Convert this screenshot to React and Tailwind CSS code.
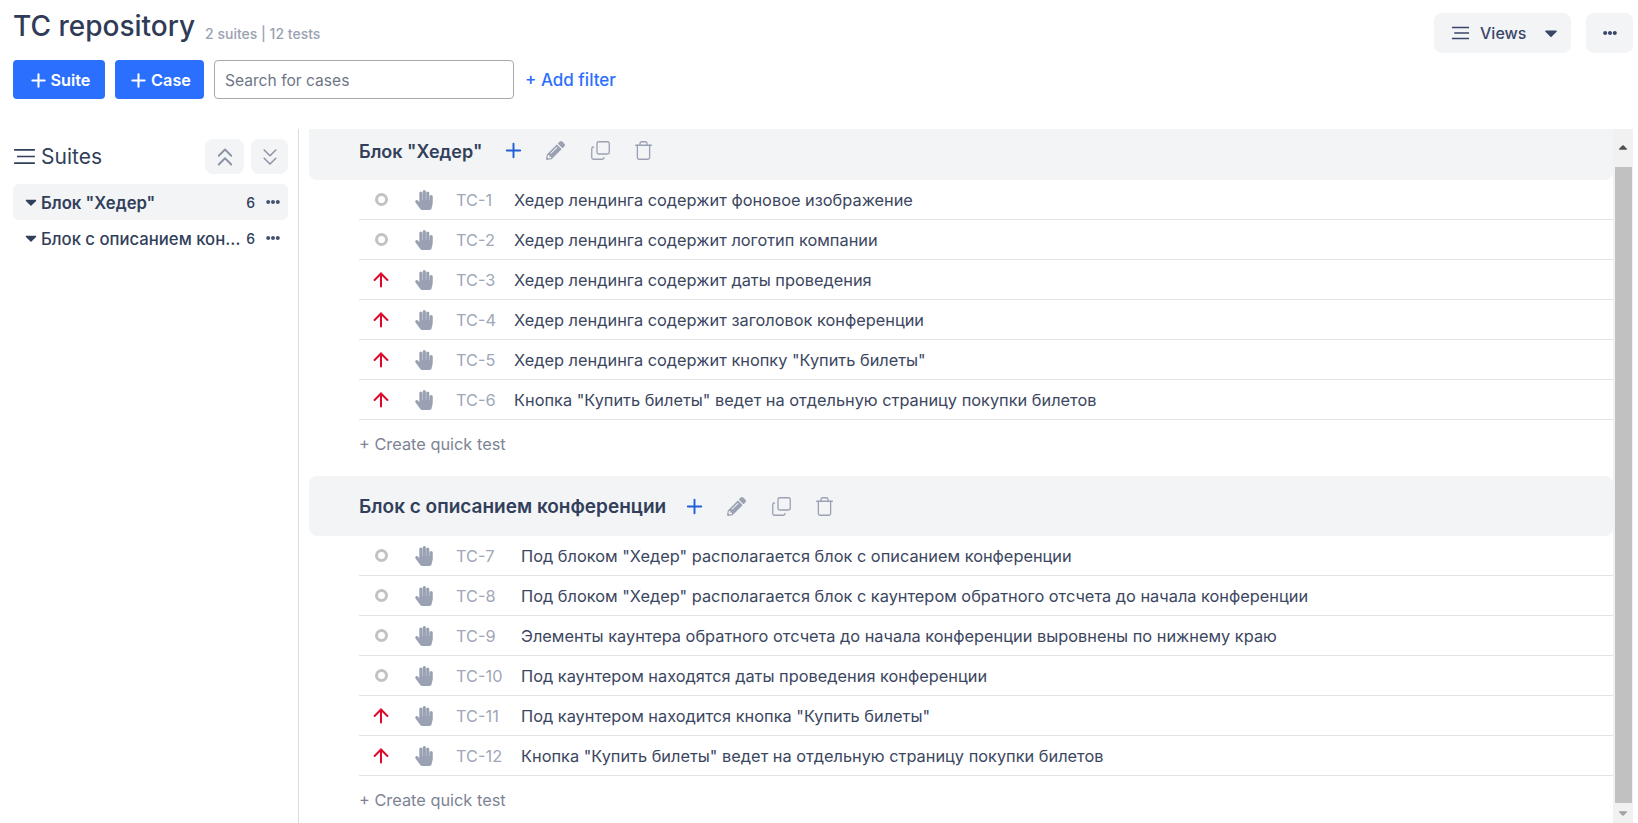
import { ArrowUp, ChevronsDown, ChevronsUp, Copy, Plus, Trash } from "lucide-react";
import { FaCaretDown, FaEllipsisH, FaHandPaper, FaPencilAlt } from "react-icons/fa";

const suites = [
  {
    name: 'Блок "Хедер"',
    head: "h-[51px] pb-[9px] rounded-b-lg",
    titleSize: "text-[18px]",
    plusGap: "ml-[20px]",
    cases: [
      ["TC-1", "Хедер лендинга содержит фоновое изображение", "none"],
      ["TC-2", "Хедер лендинга содержит логотип компании", "none"],
      ["TC-3", "Хедер лендинга содержит даты проведения", "high"],
      ["TC-4", "Хедер лендинга содержит заголовок конференции", "high"],
      ["TC-5", 'Хедер лендинга содержит кнопку "Купить билеты"', "high"],
      ["TC-6", 'Кнопка "Купить билеты" ведет на отдельную страницу покупки билетов', "high"],
    ],
    idWidth: "w-[58px]",
  },
  {
    name: "Блок с описанием конференции",
    head: "h-[60px] rounded-lg",
    titleSize: "text-[19px]",
    plusGap: "ml-[17px]",
    cases: [
      ["TC-7", 'Под блоком "Хедер" располагается блок с описанием конференции', "none"],
      ["TC-8", 'Под блоком "Хедер" располагается блок с каунтером обратного отсчета до начала конференции', "none"],
      ["TC-9", "Элементы каунтера обратного отсчета до начала конференции выровнены по нижнему краю", "none"],
      ["TC-10", "Под каунтером находятся даты проведения конференции", "none"],
      ["TC-11", 'Под каунтером находится кнопка "Купить билеты"', "high"],
      ["TC-12", 'Кнопка "Купить билеты" ведет на отдельную страницу покупки билетов', "high"],
    ],
    idWidth: "w-[65px]",
  },
];

function Lines({ className }) {
  return (
    <svg className={className} viewBox="0 0 24 18" fill="none" stroke="currentColor" strokeWidth="1.8">
      <path d="M1 2h22M4 9h19M1 16h22" />
    </svg>
  );
}

function CaseRow({ id, title, priority, idWidth }) {
  return (
    <div className="flex h-10 items-center border-b border-[#e1e3e6] text-[16.35px]">
      <div className="flex w-[44px] justify-center">
        {priority === "high" ? (
          <ArrowUp className="h-[22px] w-[22px] text-[#dc0b2c]" strokeWidth={2.2} />
        ) : (
          <span className="h-[13px] w-[13px] rounded-full border-[3px] border-[#c2c2c2]" />
        )}
      </div>
      <div className="flex w-[53px] justify-center pr-[11px]">
        <FaHandPaper className="h-[20px] w-[20px] text-[#99a1b3]" />
      </div>
      <div className={`${idWidth} pt-[2px] text-[#a0a7b7]`}>{id}</div>
      <div className="pt-[2px] text-[#3b4660]">{title}</div>
    </div>
  );
}

function Suite({ suite }) {
  return (
    <section className="mb-[8px]">
      <div className={`${suite.head} flex items-center bg-[#f3f4f6] pl-[50px]`}>
        <h2 className={`${suite.titleSize} pt-[3px] font-semibold text-[#323f5a]`}>{suite.name}</h2>
        <Plus className={`${suite.plusGap} h-[23px] w-[23px] text-[#1f5fd6]`} strokeWidth={2} />
        <FaPencilAlt className="ml-[21px] h-[19px] w-[19px] text-[#9aa1b2]" />
        <Copy className="ml-[25px] h-[21px] w-[21px] -scale-y-100 text-[#9aa1b2]" strokeWidth={1.5} />
        <Trash className="ml-[22px] h-[21px] w-[21px] text-[#9aa1b2]" strokeWidth={1.5} />
      </div>
      <div className="pl-[50px]">
        {suite.cases.map(([id, title, priority]) => (
          <CaseRow key={id} id={id} title={title} priority={priority} idWidth={suite.idWidth} />
        ))}
        <div className="flex h-[48px] items-center text-[16.35px] text-[#7d8494]">+ Create quick test</div>
      </div>
    </section>
  );
}

function SidebarItem({ name, active }) {
  return (
    <div className={`flex h-9 items-center rounded-md pl-[9px] pr-[8px] text-[16.7px] text-[#323f5a] ${active ? "bg-[#f3f4f6] font-semibold" : "font-medium"}`}>
      <FaCaretDown className="h-[18px] w-[18px] shrink-0" />
      <span className="ml-[1px] min-w-0 flex-1 truncate pt-[3px]">{name}</span>
      <span className="ml-[5px] text-[14px] font-medium">6</span>
      <FaEllipsisH className="ml-[11px] h-[14px] w-[14px] text-[#475270]" />
    </div>
  );
}

export default function App() {
  return (
    <div className="flex h-[823px] w-[1638px] flex-col overflow-hidden bg-white font-['Inter',sans-serif]">
      <header className="flex h-[129px] justify-between pl-[13px] pr-[5px]">
        <div>
          <div className="flex h-[52px] items-center">
            <h1 className="text-[28px] font-medium text-[#2f3b57]">TC repository</h1>
            <span className="ml-[10px] mt-[14px] text-[14px] font-medium text-[#9aa1b2]">2 suites | 12 tests</span>
          </div>
          <div className="mt-[8px] flex h-[39px] items-center">
            <button className="flex h-full w-[92px] items-center justify-center gap-[2px] rounded-[4px] bg-[#2b6fff] pt-px text-[16.25px] font-semibold text-white">
              <Plus className="h-[21px] w-[21px]" strokeWidth={2.4} />
              Suite
            </button>
            <button className="ml-[10px] flex h-full w-[89px] items-center justify-center gap-[2px] rounded-[4px] bg-[#2b6fff] pt-px text-[16.25px] font-semibold text-white">
              <Plus className="h-[21px] w-[21px]" strokeWidth={2.4} />
              Case
            </button>
            <input
              className="ml-[10px] h-full w-[300px] rounded-[4px] border border-[#a9a9a9] px-[10px] pt-[2px] text-[15.6px] text-[#3b4660] outline-none placeholder:text-[#6f7687]"
              placeholder="Search for cases"
            />
            <span className="ml-[11px] mt-[3px] text-[17px] font-medium text-[#2b6fff]">+ Add filter</span>
          </div>
        </div>
        <div className="mt-[13px] flex gap-[15px]">
          <button className="flex h-[40px] w-[137px] items-center rounded-lg bg-[#f3f4f6] pl-[17px] text-[16px] font-medium text-[#39466a]">
            <Lines className="h-[14px] w-[19px]" />
            <span className="ml-[10px]">Views</span>
            <FaCaretDown className="ml-[15px] h-[20px] w-[20px]" />
          </button>
          <button className="flex h-[40px] w-[47px] items-center justify-center rounded-lg bg-[#f3f4f6] text-[#39466a]">
            <FaEllipsisH className="h-[14px] w-[14px]" />
          </button>
        </div>
      </header>

      <div className="flex min-h-0 flex-1">
        <aside className="w-[299px] shrink-0 border-r border-[#dcdcdc] pl-[13px] pr-[10px]">
          <div className="mt-[10px] flex h-[35px] items-center">
            <Lines className="h-[17px] w-[23px] text-[#323f5a]" />
            <span className="ml-[5px] flex-1 text-[21px] text-[#323f5a]">Suites</span>
            <button className="flex h-[35px] w-[39px] items-center justify-center rounded-lg bg-[#f3f4f6] text-[#8a93a6]">
              <ChevronsUp className="h-[30px] w-[30px]" strokeWidth={1.5} />
            </button>
            <button className="ml-[7px] flex h-[35px] w-[37px] items-center justify-center rounded-lg bg-[#f3f4f6] text-[#8a93a6]">
              <ChevronsDown className="h-[28px] w-[28px]" strokeWidth={1.25} />
            </button>
          </div>
          <div className="mt-[10px]">
            <SidebarItem name={'Блок "Хедер"'} active />
            <SidebarItem name="Блок с описанием конференции" />
          </div>
        </aside>

        <main className="min-w-0 flex-1 pl-[10px]">
          {suites.map((suite) => (
            <Suite key={suite.name} suite={suite} />
          ))}
        </main>

        {/* Scrollbar drawn by hand, a headless browser would hide the native one */}
        <div className="mr-[5px] flex w-[20px] shrink-0 flex-col items-center bg-[#f1f1f1]">
          <div className="flex h-[38px] w-full shrink-0 items-center justify-center">
            <FaCaretDown className="h-[14px] w-[14px] rotate-180 text-[#505050]" />
          </div>
          <div className="min-h-0 w-[17px] flex-1 bg-[#c1c1c1]" />
          <div className="flex h-[20px] w-full shrink-0 items-center justify-center">
            <FaCaretDown className="h-[14px] w-[14px] text-[#a3a3a3]" />
          </div>
        </div>
      </div>
    </div>
  );
}
